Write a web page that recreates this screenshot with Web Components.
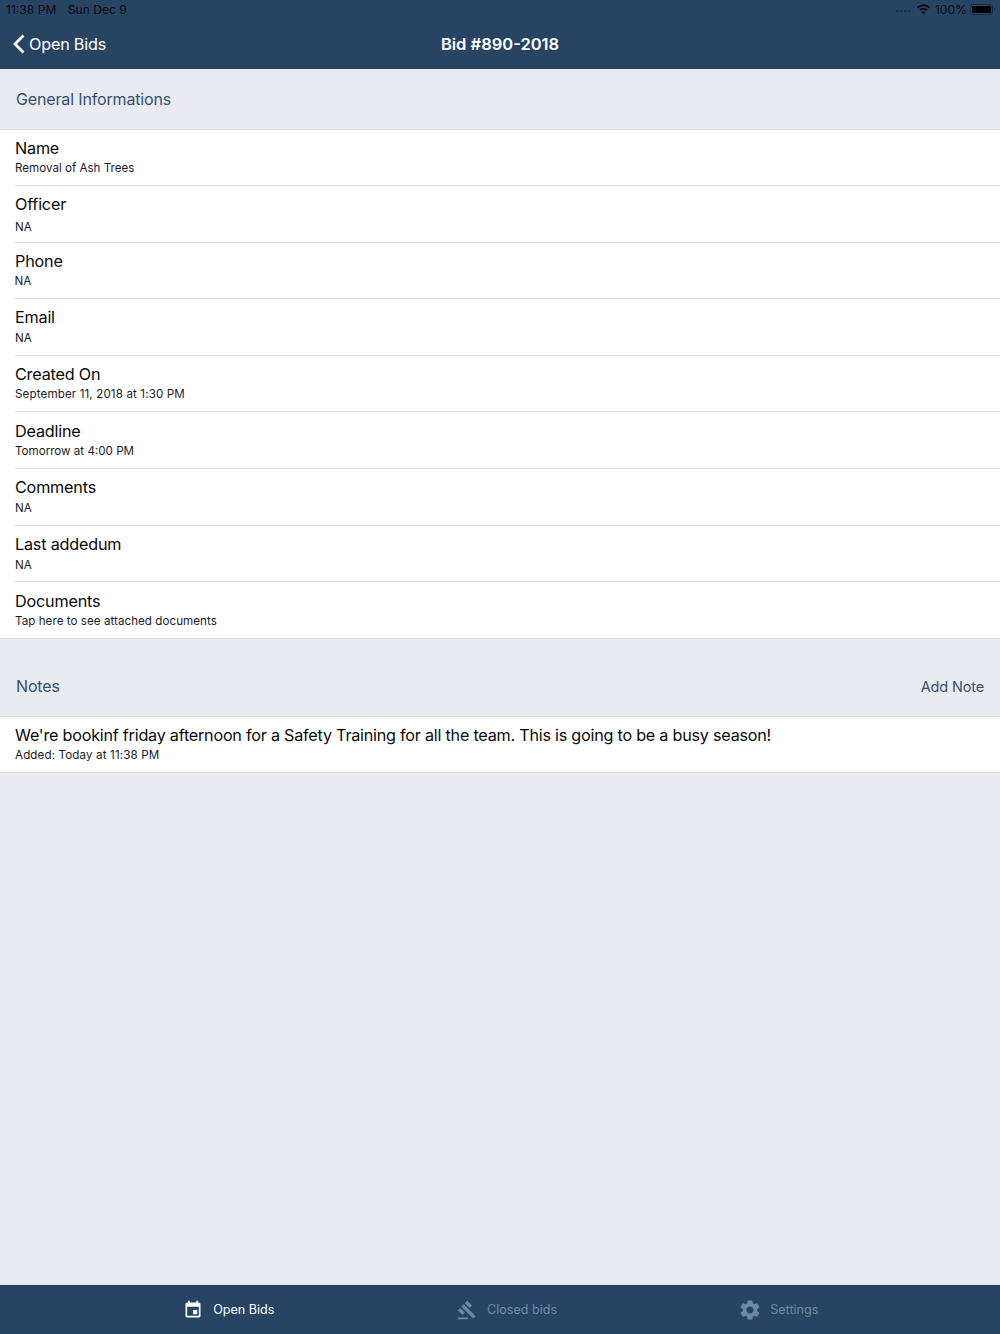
<!DOCTYPE html>
<html>
<head>
<meta charset="utf-8">
<title>Bid #890-2018</title>
<style>
    html, body {
        margin: 0;
        height: 100%;
    }
    body {
        display: flex;
        flex-direction: column;
        height: 1334px;
        overflow: hidden;
        background-color: #eaebf1;
        font-family: Inter, "Liberation Sans", sans-serif;
    }
    bid-sections {
        flex: 1;
    }
</style>
</head>
<body>
<status-nav title-text="Bid #890-2018" back-text="Open Bids"></status-nav>
<bid-sections>
    <section-head style="height: 60px">General Informations</section-head>
    <info-list>
        <info-row label="Name" gap="20" style="height: 56.2px">Removal of Ash Trees</info-row>
        <info-row label="Officer" gap="23">NA</info-row>
        <info-row label="Phone" gap="20" shift="-0.5">NA</info-row>
        <info-row label="Email" gap="21">NA</info-row>
        <info-row label="Created On" gap="20.5" wide>September 11, 2018 at 1:30 PM</info-row>
        <info-row label="Deadline" gap="20">Tomorrow at 4:00 PM</info-row>
        <info-row label="Comments" gap="21">NA</info-row>
        <info-row label="Last addedum" gap="21">NA</info-row>
        <info-row label="Documents" gap="20" last style="padding-top: 8.5px; --value-spacing: 0.05px">Tap here to see attached documents</info-row>
    </info-list>
    <section-head style="height: 77px; padding-top: 18px">Notes<span slot="action" style="font-size: 14.500px">Add Note</span></section-head>
    <info-list>
        <info-row label="We're bookinf friday afternoon for a Safety Training for all the team. This is going to be a busy season!" gap="20" last wide style="height: 55px; padding-top: 8.5px; --label-spacing: -0.24px">Added: Today at 11:38 PM</info-row>
    </info-list>
</bid-sections>
<tab-bar>
    <tab-item active>
        <svg slot="icon" viewBox="0 0 24 24" width="20" height="20"><path fill="currentColor" d="M17 12h-5v5h5v-5zM16 1v2H8V1H6v2H5c-1.11 0-1.99.9-1.99 2L3 19c0 1.1.89 2 2 2h14c1.1 0 2-.9 2-2V5c0-1.1-.9-2-2-2h-1V1h-2zm3 18H5V8h14v11z"/></svg>
        Open Bids
    </tab-item>
    <tab-item>
        <svg slot="icon" viewBox="0 0 24 24" width="20" height="20"><path fill="currentColor" d="M1 21h12v2H1zM5.245 8.07l2.83-2.827 14.14 14.142-2.828 2.828zM12.317 1l5.657 5.656-2.83 2.83-5.654-5.66zM3.825 9.485l5.657 5.657-2.828 2.828-5.657-5.657z"/></svg>
        Closed bids
    </tab-item>
    <tab-item style="margin-left: 0.5px">
        <svg slot="icon" viewBox="0 0 24 24" width="24" height="24" style="margin: 0 -2px"><path fill="currentColor" d="M19.14 12.94c.04-.3.06-.61.06-.94 0-.32-.02-.64-.07-.94l2.03-1.58c.18-.14.23-.41.12-.61l-1.92-3.32c-.12-.22-.37-.29-.59-.22l-2.39.96c-.5-.38-1.03-.7-1.62-.94l-.36-2.54c-.04-.24-.24-.41-.48-.41h-3.84c-.24 0-.43.17-.47.41l-.36 2.54c-.59.24-1.13.57-1.62.94l-2.39-.96c-.22-.08-.47 0-.59.22L2.74 8.87c-.12.21-.08.47.12.61l2.03 1.58c-.05.3-.09.63-.09.94s.02.64.07.94l-2.03 1.58c-.18.14-.23.41-.12.61l1.92 3.32c.12.22.37.29.59.22l2.39-.96c.5.38 1.03.7 1.62.94l.36 2.54c.05.24.24.41.48.41h3.84c.24 0 .44-.17.47-.41l.36-2.54c.59-.24 1.13-.56 1.62-.94l2.39.96c.22.08.47 0 .59-.22l1.92-3.32c.12-.22.07-.47-.12-.61l-2.01-1.58zM12 15.6c-1.98 0-3.6-1.62-3.6-3.6s1.62-3.6 3.6-3.6 3.6 1.62 3.6 3.6-1.62 3.6-3.6 3.6z"/></svg>
        Settings
    </tab-item>
</tab-bar>
<script>
class StatusNav extends HTMLElement {
    constructor() {
        super();
        this.shadowDOM = this.attachShadow({ mode: 'open' });
    }

    connectedCallback() {
        this.shadowDOM.innerHTML = `
            <style>
                :host {
                    display: block;
                    height: 69px;
                    background-color: #274563;
                    box-sizing: border-box;
                }
                .status {
                    display: flex;
                    align-items: center;
                    height: 19px;
                    padding: 0 5px 0 6px;
                    font-size: 12.100px;
                    color: #040a12;
                }
                .status .time {
                    margin-right: 11.500px;
                }
                .status .right {
                    margin-left: auto;
                    display: flex;
                    align-items: center;
                    gap: 4px;
                }
                .battery {
                    margin-left: -1px;
                }
                .dots {
                    display: flex;
                    gap: 1.5px;
                    margin-right: 1px;
                }
                .dots i {
                    width: 2.5px;
                    height: 2.5px;
                    margin-top: 3px;
                    border-radius: 50%;
                    background-color: #040a12;
                    opacity: 0.3;
                }
                .bar {
                    display: grid;
                    grid-template-columns: 1fr auto 1fr;
                    align-items: center;
                    height: 50px;
                    padding-bottom: 1px;
                    box-sizing: border-box;
                    color: #fff;
                }
                .back {
                    display: flex;
                    align-items: center;
                    gap: 3px;
                    padding-left: 12px;
                    font-size: 16.200px;
                    letter-spacing: -0.2px;
                }
                h1 {
                    margin: 0;
                    font-size: 16.500px;
                    font-weight: 600;
                }
            </style>
            <div class="status">
                <span class="time">11:38 PM</span><span>Sun Dec 9</span>
                <div class="right">
                    <span class="dots"><i></i><i></i><i></i><i></i></span>
                    <svg width="15" height="11" viewBox="0 0 15 11"><path fill="#040a12" d="M7.5 2.3c2 0 3.9.8 5.3 2.1l1.1-1.2C12.2 1.6 9.9.6 7.5.6S2.8 1.6 1.1 3.2l1.1 1.2c1.4-1.3 3.3-2.1 5.3-2.1zM7.5 5.6c1.1 0 2.2.4 3 1.2l1.1-1.2C10.5 4.5 9 3.9 7.5 3.9s-3 .6-4.1 1.7l1.1 1.2c.8-.8 1.9-1.2 3-1.2zM7.5 10.4 9.4 8.3c-.5-.5-1.2-.8-1.9-.8s-1.4.3-1.9.8z"/></svg>
                    <span>100%</span>
                    <svg class="battery" width="25" height="11" viewBox="0 0 25 11"><rect x="0.5" y="0.5" width="22" height="10" rx="2.5" fill="none" stroke="#040a12" stroke-opacity="0.4"/><rect x="2" y="2" width="19" height="7" rx="1.2" fill="#000"/><path d="M24 4v3c.6-.2 1-.8 1-1.5S24.600 4.200 24 4z" fill="#040a12" fill-opacity="0.5"/></svg>
                </div>
            </div>
            <div class="bar">
                <div class="back">
                    <svg width="14" height="20" viewBox="0 0 14 20"><path d="M11.500 1.500 3 10l8.500 8.500" fill="none" stroke="#fff" stroke-width="2.800"/></svg>
                    <span>${this.getAttribute('back-text')}</span>
                </div>
                <h1>${this.getAttribute('title-text')}</h1>
                <div></div>
            </div>
        `;
    }
}

class SectionHead extends HTMLElement {
    constructor() {
        super();
        this.shadowDOM = this.attachShadow({ mode: 'open' });
        this.shadowDOM.innerHTML = `
            <style>
                :host {
                    display: flex;
                    align-items: center;
                    justify-content: space-between;
                    box-sizing: border-box;
                    padding: 0 16px;
                    font-size: 16px;
                    letter-spacing: -0.15px;
                    color: #34506f;
                }
            </style>
            <slot></slot>
            <slot name="action"></slot>
        `;
    }
}

class InfoList extends HTMLElement {
    constructor() {
        super();
        this.shadowDOM = this.attachShadow({ mode: 'open' });
        this.shadowDOM.innerHTML = `
            <style>
                :host {
                    display: block;
                    background-color: #fff;
                    border-top: 1px solid #dcdce0;
                    border-bottom: 1px solid #dcdce0;
                }
            </style>
            <slot></slot>
        `;
    }
}

class InfoRow extends HTMLElement {
    constructor() {
        super();
        this.shadowDOM = this.attachShadow({ mode: 'open' });
    }

    connectedCallback() {
        const gap = Number(this.getAttribute('gap')) || 20;
        const shift = Number(this.getAttribute('shift')) || 0;
        this.shadowDOM.innerHTML = `
            <style>
                :host {
                    display: block;
                    height: 56.570px;
                    box-sizing: border-box;
                    margin-left: 15px;
                    padding-top: 8.100px;
                    border-bottom: 1px solid #dcdce0;
                    color: #0a0a0a;
                }
                :host([last]) {
                    height: 55.810px;
                    border-bottom: 0;
                }
                :host([wide]) .value {
                    letter-spacing: 0.13px;
                }
                .label {
                    font-size: 16.200px;
                    letter-spacing: var(--label-spacing, -0.2px);
                    line-height: 20px;
                    white-space: nowrap;
                }
                .value {
                    font-size: 11.600px;
                    letter-spacing: var(--value-spacing, 0);
                    line-height: 14px;
                    margin-top: ${gap - 17}px;
                    margin-left: ${shift}px;
                    color: #1c1c1e;
                    white-space: nowrap;
                }
            </style>
            <div class="label">${this.getAttribute('label')}</div>
            <div class="value"><slot></slot></div>
        `;
    }
}

class TabBar extends HTMLElement {
    constructor() {
        super();
        this.shadowDOM = this.attachShadow({ mode: 'open' });
        this.shadowDOM.innerHTML = `
            <style>
                :host {
                    display: flex;
                    justify-content: center;
                    align-items: center;
                    gap: 182.500px;
                    height: 49px;
                    box-sizing: border-box;
                    padding-left: 1.500px;
                    padding-bottom: 1px;
                    background-color: #274563;
                    border-top: 1px solid #1f3a55;
                    font-size: 12.600px;
                }
            </style>
            <slot></slot>
        `;
    }
}

class TabItem extends HTMLElement {
    constructor() {
        super();
        this.shadowDOM = this.attachShadow({ mode: 'open' });
        this.shadowDOM.innerHTML = `
            <style>
                :host {
                    display: flex;
                    align-items: center;
                    gap: 10px;
                    color: #6f88a3;
                }
                :host([active]) {
                    color: #fff;
                }
                ::slotted(svg) {
                    display: block;
                }
            </style>
            <slot name="icon"></slot>
            <slot></slot>
        `;
    }
}

customElements.define('status-nav', StatusNav);
customElements.define('section-head', SectionHead);
customElements.define('info-list', InfoList);
customElements.define('info-row', InfoRow);
customElements.define('tab-bar', TabBar);
customElements.define('tab-item', TabItem);
</script>
</body>
</html>
